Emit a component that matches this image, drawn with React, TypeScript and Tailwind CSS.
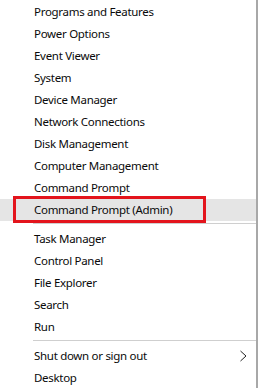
import React from 'react';

type Item = { label: string; highlighted?: boolean; submenu?: boolean };

const groups: Item[][] = [
  [
    { label: 'Programs and Features' },
    { label: 'Power Options' },
    { label: 'Event Viewer' },
    { label: 'System' },
    { label: 'Device Manager' },
    { label: 'Network Connections' },
    { label: 'Disk Management' },
    { label: 'Computer Management' },
    { label: 'Command Prompt' },
    { label: 'Command Prompt (Admin)', highlighted: true },
  ],
  [
    { label: 'Task Manager' },
    { label: 'Control Panel' },
    { label: 'File Explorer' },
    { label: 'Search' },
    { label: 'Run' },
  ],
  [{ label: 'Shut down or sign out', submenu: true }, { label: 'Desktop' }],
];

const MenuRow: React.FC<{ item: Item }> = ({ item }) => (
  <div
    className={`relative flex h-[22px] items-center pl-[34px] pr-[9px] ${
      item.highlighted ? 'bg-[#e5e5e5]' : ''
    }`}
  >
    <span className="flex-1 whitespace-nowrap">{item.label}</span>
    {item.submenu && (
      <svg width="7" height="12" viewBox="0 0 7 12">
        <path d="M0.5 1 L6 6 L0.5 11" fill="none" stroke="#222" strokeWidth="1" />
      </svg>
    )}
    {/* red annotation box */}
    {item.highlighted && (
      <div className="pointer-events-none absolute left-[13px] top-[-3px] h-[27px] w-[193px] border-[3px] border-[#e3141c]" />
    )}
  </div>
);

export default function App() {
  return (
    <div className="flex h-[388px] w-[261px] bg-white">
      <div
        className="w-[258px] border-r-2 border-[#a8a8a8] bg-white pt-[1px] text-[11.5px] tracking-[-0.3px] text-[#0a0a0a]"
        style={{ fontFamily: '"Segoe UI", "Noto Sans", sans-serif' }}
      >
        {groups.map((group, gi) => (
          <div key={gi}>
            {gi > 0 && (
              <div className="flex h-[7px] items-start pt-[2px] pl-[33px]">
                <div className="h-px w-full bg-[#cfcfcf]" />
              </div>
            )}
            {group.map((item) => (
              <MenuRow key={item.label} item={item} />
            ))}
          </div>
        ))}
      </div>
      <div className="flex-1 bg-white" />
    </div>
  );
}
